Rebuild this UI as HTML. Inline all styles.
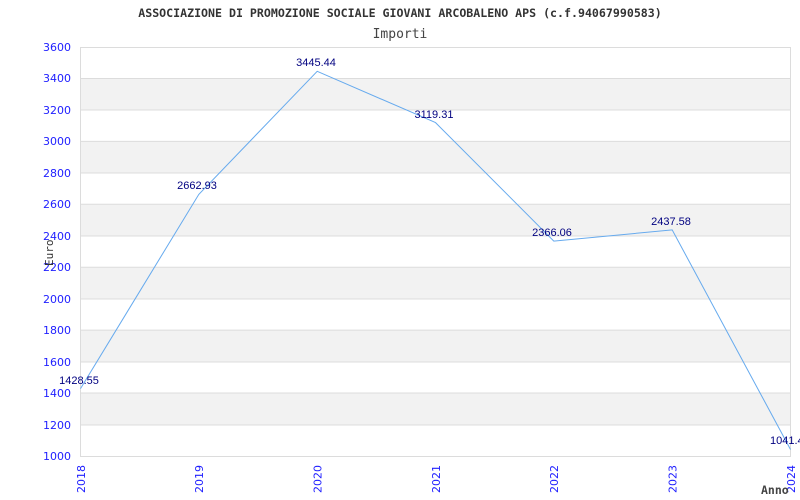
<!DOCTYPE html>
<html><head><style>body{margin:0;background:#fff}svg{display:block}</style></head><body>
<svg width="800" height="500" xmlns="http://www.w3.org/2000/svg">
<rect width="800" height="500" fill="#fff"/>
<g fill="#f2f2f2">
<rect x="80" y="78.5" width="710" height="31.5"/><rect x="80" y="141.4" width="710" height="31.5"/>
<rect x="80" y="204.3" width="710" height="31.5"/><rect x="80" y="267.2" width="710" height="31.5"/>
<rect x="80" y="330.1" width="710" height="31.5"/><rect x="80" y="393" width="710" height="31.5"/>
</g>
<g stroke="#dcdcdc" stroke-width="1">
<line x1="80" y1="47.5" x2="790" y2="47.5"/><line x1="80" y1="78.5" x2="790" y2="78.5"/>
<line x1="80" y1="110" x2="790" y2="110"/><line x1="80" y1="141.4" x2="790" y2="141.4"/>
<line x1="80" y1="173" x2="790" y2="173"/><line x1="80" y1="204.3" x2="790" y2="204.3"/>
<line x1="80" y1="236" x2="790" y2="236"/><line x1="80" y1="267.2" x2="790" y2="267.2"/>
<line x1="80" y1="299" x2="790" y2="299"/><line x1="80" y1="330.1" x2="790" y2="330.1"/>
<line x1="80" y1="362" x2="790" y2="362"/><line x1="80" y1="393" x2="790" y2="393"/>
<line x1="80" y1="425" x2="790" y2="425"/><line x1="80" y1="456.5" x2="790" y2="456.5"/>
<line x1="80.5" y1="47" x2="80.5" y2="457"/><line x1="790.5" y1="47" x2="790.5" y2="457"/>
</g>
<polyline fill="none" stroke="#66aaee" stroke-width="1" points="80.5,388.6 198.8,194.4 317.2,71.3 435.5,122.6 553.8,241.1 672.2,229.9 790.5,449.5"/>
<g font-family="Liberation Sans, sans-serif" font-size="11" fill="#000080" text-anchor="middle">
<text x="79" y="384">1428.55</text><text x="197" y="189">2662.93</text>
<text x="316" y="66">3445.44</text><text x="434" y="118">3119.31</text>
<text x="552" y="236">2366.06</text><text x="671" y="225">2437.58</text>
<text x="770" y="444" text-anchor="start">1041.4</text>
</g>
<g font-family="DejaVu Sans, sans-serif" font-size="11" fill="#2020ff" text-anchor="end">
<text x="71" y="51">3600</text><text x="71" y="82">3400</text><text x="71" y="114">3200</text>
<text x="71" y="145">3000</text><text x="71" y="177">2800</text><text x="71" y="208">2600</text>
<text x="71" y="240">2400</text><text x="71" y="271">2200</text><text x="71" y="303">2000</text>
<text x="71" y="334">1800</text><text x="71" y="366">1600</text><text x="71" y="397">1400</text>
<text x="71" y="429">1200</text><text x="71" y="460">1000</text>
</g>
<g font-family="DejaVu Sans, sans-serif" font-size="11" fill="#2020ff" text-anchor="end">
<text transform="translate(85,465) rotate(-90)">2018</text>
<text transform="translate(203,465) rotate(-90)">2019</text>
<text transform="translate(321.5,465) rotate(-90)">2020</text>
<text transform="translate(440,465) rotate(-90)">2021</text>
<text transform="translate(558,465) rotate(-90)">2022</text>
<text transform="translate(676.5,465) rotate(-90)">2023</text>
<text transform="translate(795,465) rotate(-90)">2024</text>
</g>
<text x="400" y="17" text-anchor="middle" font-family="DejaVu Sans Mono, monospace" font-size="11.6" font-weight="bold" fill="#333">ASSOCIAZIONE DI PROMOZIONE SOCIALE GIOVANI ARCOBALENO APS (c.f.94067990583)</text>
<text x="400" y="38" text-anchor="middle" font-family="DejaVu Sans Mono, monospace" font-size="13" fill="#444">Importi</text>
<text transform="translate(53,266) rotate(-90)" font-family="DejaVu Sans Mono, monospace" font-size="11" fill="#333">Euro</text>
<text x="761" y="494" font-family="DejaVu Sans Mono, monospace" font-size="11.5" font-weight="bold" fill="#444">Anno</text>
</svg>
</body></html>
